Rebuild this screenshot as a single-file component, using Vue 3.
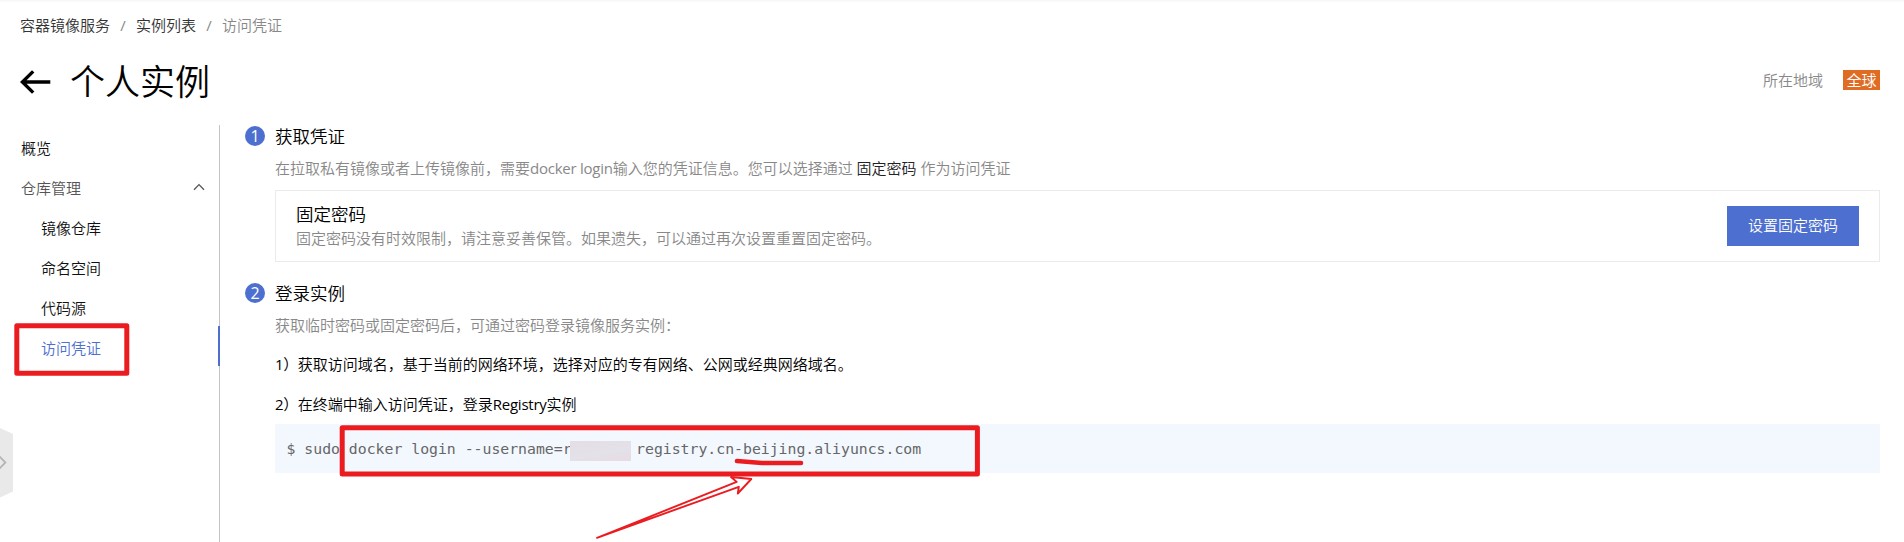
<script setup>
const crumbs = ['容器镜像服务', '实例列表', '访问凭证']
const subItems = [
  { label: '镜像仓库' },
  { label: '命名空间' },
  { label: '代码源' },
  { label: '访问凭证', active: true },
]
</script>

<template>
  <div class="page">
    <nav class="crumbs">
      <template v-for="(c, i) in crumbs" :key="c">
        <span v-if="i" class="sep">/</span>
        <span :class="['crumb', { current: i === crumbs.length - 1 }]">{{ c }}</span>
      </template>
    </nav>

    <header class="head">
      <svg class="back" width="31" height="24" viewBox="0 0 31 24" fill="none" stroke="#000" stroke-width="3.4">
        <path d="M2 12H30.3M13.2 1.4L2.4 12L13.2 22.6" />
      </svg>
      <h1>个人实例</h1>
      <span class="region">所在地域</span>
      <span class="tag">全球</span>
    </header>

    <div class="body">
      <aside class="side">
        <div class="item">概览</div>
        <div class="item group">
          <span>仓库管理</span>
          <svg width="12" height="8" viewBox="0 0 12 8" fill="none" stroke="#555" stroke-width="1.3">
            <path d="M1 6.8L6 1.6L11 6.8" />
          </svg>
        </div>
        <div v-for="s in subItems" :key="s.label" :class="['item', 'sub', { active: s.active }]">{{ s.label }}</div>
      </aside>

      <main class="main">
        <section class="step">
          <div class="step-title"><span class="num">1</span>获取凭证</div>
          <p class="desc">在拉取私有镜像或者上传镜像前，需要<span class="latin">docker login</span>输入您的凭证信息。您可以选择通过 <b>固定密码</b> 作为访问凭证</p>
          <div class="card">
            <div class="card-text">
              <div class="card-title">固定密码</div>
              <div class="card-sub">固定密码没有时效限制，请注意妥善保管。如果遗失，可以通过再次设置重置固定密码。</div>
            </div>
            <button class="btn">设置固定密码</button>
          </div>
        </section>

        <section class="step second">
          <div class="step-title"><span class="num">2</span>登录实例</div>
          <p class="desc">获取临时密码或固定密码后，可通过密码登录镜像服务实例：</p>
          <p class="line"><span class="ord">1）</span>获取访问域名，基于当前的网络环境，选择对应的专有网络、公网或经典网络域名。</p>
          <p class="line"><span class="ord">2）</span>在终端中输入访问凭证，登录<span class="latin">Registry</span>实例</p>
          <div class="code"><span>$ sudo docker login --username=r</span><i class="mask"></i><span>registry.cn-beijing.aliyuncs.com</span></div>
        </section>
      </main>
    </div>

    <svg class="overlay" width="1904" height="542" viewBox="0 0 1904 542" fill="none">
      <path d="M0 428L13 434V491.5L0 497.5Z" fill="#e9e9e9" />
      <path d="M-1 456L5.4 462.5L-1 469" stroke="#b5b5b5" stroke-width="1.8" />
      <g stroke="#eb1c20" stroke-linejoin="round" stroke-linecap="round">
        <rect x="16.8" y="325.8" width="110" height="47.4" stroke-width="5" />
        <rect x="342.2" y="427.7" width="635.2" height="46.2" stroke-width="5" />
        <path d="M737 461L762 463L801 463" stroke-width="4.6" />
        <path d="M597 537.8L736.7 481.9L731 477L751.3 479L737.8 493.5L738.8 486.8Z" stroke-width="1.9" />
      </g>
    </svg>
  </div>
</template>

<style>
body { background: #fff; overflow: hidden; }
</style>

<style scoped>
.page {
  position: relative;
  width: 1904px;
  height: 542px;
  overflow: hidden;
  box-sizing: border-box;
  padding-top: 15px;
  background: linear-gradient(#f5f5f5, #fff 3px);
  font-family: "Open Sans", "Noto Sans CJK SC", sans-serif;
  font-size: 15px;
  font-weight: 350;
  line-height: 20px;
  color: #111;
}
.crumbs { display: flex; height: 20px; padding-left: 20px; color: #333; }
.sep { width: 26px; text-align: center; color: #888; font-weight: 400; }
.current { color: #888; }
.head { display: flex; align-items: center; height: 90px; padding: 0 24px 0 20px; box-sizing: border-box; }
.back { margin-top: 3px; }
h1 { margin: 3px auto 0 19px; font-size: 35px; line-height: 48px; font-weight: 350; color: #000; }
.region { color: #888; }
.tag { margin-left: 20px; padding: 0 3.5px; background: #e06c24; color: #fff; }
.body { display: flex; height: 417px; }
.side { width: 220px; height: 417px; box-sizing: border-box; border-right: 1px solid #c4c4c4; padding-top: 1px; }
.item { height: 40px; box-sizing: border-box; padding-top: 3px; line-height: 38px; padding-left: 21px; }
.group { display: flex; align-items: center; justify-content: space-between; padding-right: 14px; color: #555; }
.group svg { margin-top: -2px; }
.sub { padding-left: 41px; }
.active { color: #4d6fcf; margin-right: -1px; border-right: 2px solid #4d6fcf; }
.main { flex: 1; padding: 0 24px 0 25px; }
.step-title { display: flex; align-items: center; height: 22px; font-size: 17.5px; line-height: 22px; color: #000; }
.num {
  width: 20px; height: 20px; margin-right: 10px; border-radius: 50%;
  background: #4d6fcf; color: #fff; font-size: 16px; font-weight: 400; line-height: 20px; text-align: center;
}
.desc { margin: 11px 0 0 30px; color: #888; }
.desc b { font-weight: 350; color: #222; }
.latin { font-weight: 400; letter-spacing: -0.25px; }
.ord { font-weight: 400; letter-spacing: -0.4px; }
.card {
  display: flex; align-items: center; justify-content: space-between;
  height: 72px; box-sizing: border-box; margin: 12px 0 0 30px; padding: 0 20px;
  border: 1px solid #ebebeb; background: #fff;
}
.card-title { margin-top: -1px; font-size: 17.5px; line-height: 24px; color: #000; }
.card-sub { padding-top: 1px; line-height: 22px; color: #888; }
.btn { width: 132px; height: 40px; padding: 0 0 2px; border: 0; background: #4d6fcf; color: #fff; font: inherit; }
.second { margin-top: 20px; }
.line { margin: 20px 0 0 30px; color: #000; }
.desc + .line { margin-top: 19px; }
.code {
  display: flex; align-items: center; height: 49px; margin: 10px 0 0 30px; padding-left: 11.5px;
  background: #f3f8ff; color: #666; white-space: pre;
  font-family: "DejaVu Sans Mono", monospace; font-size: 14.8px; font-weight: 400;
}
.mask { width: 61px; height: 20px; margin: 5px 5px 0 -1.5px; background: linear-gradient(170deg, #e4dfe7 20%, #e3e1e9 60%, #e9dbe2); }
.overlay { position: absolute; left: 0; top: 0; pointer-events: none; }
</style>
